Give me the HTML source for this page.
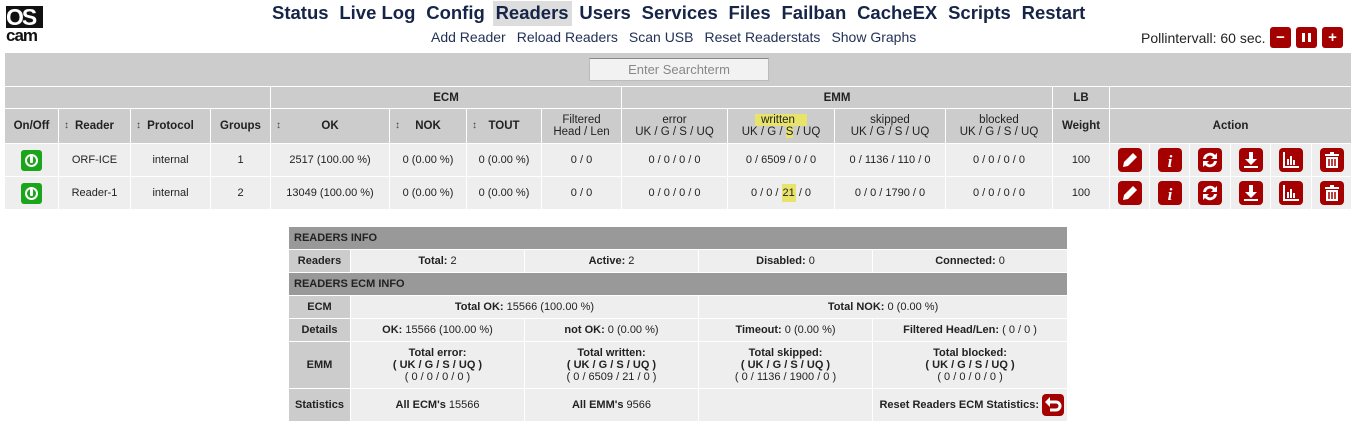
<!DOCTYPE html>
<html><head><meta charset="utf-8"><style>
body{margin:0;width:1356px;height:442px;background:#fff;font-family:"Liberation Sans",Arial,sans-serif;position:relative;overflow:hidden;color:#222}
.nav{position:absolute;top:1px;left:269px;font-size:18.5px;font-weight:bold;color:#162447;white-space:nowrap}
.nav span{display:inline-block;padding:1px 3px 2px;margin-right:4.8px}
.nav .act{background:#ddd}
.sub{position:absolute;top:29px;left:431px;font-size:14px;color:#1f2f55;white-space:nowrap;word-spacing:0}
.sub span{margin-right:11px}
.poll{position:absolute;top:30px;left:1141px;font-size:14px;color:#222}
.pb{position:absolute;top:27px;width:21px;height:21px;background:#a50000;border-radius:3px;color:#fff;font-weight:bold;text-align:center;line-height:21px;font-size:15px}
table{border-collapse:collapse;table-layout:fixed;position:absolute}
td{border:1px solid #fff;text-align:center;font-size:11px;padding:0;overflow:hidden;white-space:nowrap}
#m{left:4px;top:52px;width:1348px}
#m .h td{background:#ccc;font-weight:bold;font-size:11.5px;color:#222}
#m .d td{background:#eee;color:#222}
.srt{position:relative}
.srt:before{content:"\2195";position:absolute;left:5px;font-size:10px;font-weight:normal;color:#444}
.on{display:inline-block;width:21px;height:21px;background:#1aa51a;border-radius:3px;vertical-align:middle;position:relative}
.on:after{content:"";position:absolute;left:4px;top:4px;width:9px;height:9px;border:2px solid #fff;border-radius:50%}
.on:before{content:"";position:absolute;left:9px;top:6px;width:3px;height:7px;background:#fff;z-index:1;border-radius:1px}
.ic{display:inline-block;width:24px;height:24px;background:#a50000;border-radius:4px;vertical-align:middle}
.ic svg{display:block}
#b{left:288px;top:226px;width:779px}
#b td{background:#eee;height:22px;font-size:11px;color:#222}
#b td.l{background:#ccc;font-weight:bold}
#b td.g{background:#999;text-align:left;font-weight:bold;padding-left:5px;color:#222;font-size:11px}
b{font-weight:bold}
</style></head><body>
<div style="position:absolute;left:6px;top:6px;width:37px;height:38px">
<div style="background:#111;color:#fff;font-weight:bold;font-size:23px;line-height:22px;letter-spacing:-2px;width:37px;height:22px;overflow:hidden">OS</div>
<div style="color:#111;font-weight:bold;font-size:17px;line-height:16px;letter-spacing:-1px">cam</div></div>
<div class="nav"><span>Status</span><span>Live Log</span><span>Config</span><span class="act">Readers</span><span>Users</span><span>Services</span><span>Files</span><span>Failban</span><span>CacheEX</span><span>Scripts</span><span>Restart</span></div>
<div class="sub"><span>Add Reader</span><span>Reload Readers</span><span>Scan USB</span><span>Reset Readerstats</span><span>Show Graphs</span></div>
<div class="poll">Pollintervall: 60 sec.</div>
<div class="pb" style="left:1270px">&minus;</div>
<div class="pb" style="left:1296px"><div style="position:absolute;left:6px;top:6px;width:3px;height:9px;background:#fff"></div><div style="position:absolute;left:12px;top:6px;width:3px;height:9px;background:#fff"></div></div>
<div class="pb" style="left:1322px">+</div>

<table id="m">
<colgroup><col style="width:54px"><col style="width:72px"><col style="width:80px"><col style="width:60px"><col style="width:119px"><col style="width:77px"><col style="width:75px"><col style="width:80px"><col style="width:106px"><col style="width:107px"><col style="width:111px"><col style="width:107px"><col style="width:57px"><col style="width:40px"><col style="width:40px"><col style="width:41px"><col style="width:40px"><col style="width:41px"><col style="width:40px"></colgroup>
<tr class="h"><td colspan="19" style="height:33px;position:relative"><div style="position:absolute;left:584px;top:5px;width:178px;height:21px;background:#f2f2f2;border:1px solid #bbb;border-top-color:#888;font-weight:normal;color:#888;font-size:13px;line-height:21px">Enter Searchterm</div></td></tr>
<tr class="h"><td colspan="4" style="height:21px"></td><td colspan="4">ECM</td><td colspan="4">EMM</td><td>LB</td><td colspan="6"></td></tr>
<tr class="h" style="height:35px"><td>On/Off</td><td class="srt">Reader</td><td class="srt">Protocol</td><td>Groups</td><td class="srt">OK</td><td class="srt">NOK</td><td class="srt">TOUT</td><td style="font-weight:normal">Filtered<br>Head / Len</td><td style="font-weight:normal">error<br>UK / G / S / UQ</td><td style="font-weight:normal"><span style="background:#e8e36a;padding:0 12px 0 6px">written</span><br>UK / G / <span style="background:#e8e36a">S</span> / UQ</td><td style="font-weight:normal">skipped<br>UK / G / S / UQ</td><td style="font-weight:normal">blocked<br>UK / G / S / UQ</td><td>Weight</td><td colspan="6">Action</td></tr>
<tr class="d" style="height:33px"><td><span class="on"></span></td><td>ORF-ICE</td><td>internal</td><td>1</td><td>2517 (100.00 %)</td><td>0 (0.00 %)</td><td>0 (0.00 %)</td><td>0 / 0</td><td>0 / 0 / 0 / 0</td><td>0 / 6509 / 0 / 0</td><td>0 / 1136 / 110 / 0</td><td>0 / 0 / 0 / 0</td><td>100</td>
<td><span class="ic"><svg width="24" height="24"><path d="M5 19l1-5 9-9 4 4-9 9z" fill="#fff"/></svg></span></td>
<td><span class="ic"><svg width="24" height="24"><text x="12" y="19" fill="#fff" font-size="17" font-weight="bold" font-style="italic" font-family="Liberation Serif" text-anchor="middle">i</text></svg></span></td>
<td><span class="ic"><svg width="24" height="24"><path d="M5 11a7 7 0 0 1 12-4l2-2v6h-6l2-2a4 4 0 0 0-7 2zM19 13a7 7 0 0 1-12 4l-2 2v-6h6l-2 2a4 4 0 0 0 7-2z" fill="#fff"/></svg></span></td>
<td><span class="ic"><svg width="24" height="24"><path d="M10 4h4v7h4l-6 6-6-6h4zM5 18h14v2H5z" fill="#fff"/></svg></span></td>
<td><span class="ic"><svg width="24" height="24"><path d="M4 4h2v14h14v2H4zM8 11h2v6H8zM11 8h2v9h-2zM14 12h2v5h-2z" fill="#fff"/></svg></span></td>
<td><span class="ic"><svg width="24" height="24"><path d="M5 6h14v2H5zM10 4h4v2h-4zM6 9h12v11H6z" fill="#fff"/><path d="M9 11v7M12 11v7M15 11v7" stroke="#a50000" stroke-width="1.5"/></svg></span></td></tr>
<tr class="d" style="height:33px"><td><span class="on"></span></td><td>Reader-1</td><td>internal</td><td>2</td><td>13049 (100.00 %)</td><td>0 (0.00 %)</td><td>0 (0.00 %)</td><td>0 / 0</td><td>0 / 0 / 0 / 0</td><td>0 / 0 / <span style="background:#e8e36a;padding:3px 1px">21</span> / 0</td><td>0 / 0 / 1790 / 0</td><td>0 / 0 / 0 / 0</td><td>100</td>
<td><span class="ic"><svg width="24" height="24"><path d="M5 19l1-5 9-9 4 4-9 9z" fill="#fff"/></svg></span></td>
<td><span class="ic"><svg width="24" height="24"><text x="12" y="19" fill="#fff" font-size="17" font-weight="bold" font-style="italic" font-family="Liberation Serif" text-anchor="middle">i</text></svg></span></td>
<td><span class="ic"><svg width="24" height="24"><path d="M5 11a7 7 0 0 1 12-4l2-2v6h-6l2-2a4 4 0 0 0-7 2zM19 13a7 7 0 0 1-12 4l-2 2v-6h6l-2 2a4 4 0 0 0 7-2z" fill="#fff"/></svg></span></td>
<td><span class="ic"><svg width="24" height="24"><path d="M10 4h4v7h4l-6 6-6-6h4zM5 18h14v2H5z" fill="#fff"/></svg></span></td>
<td><span class="ic"><svg width="24" height="24"><path d="M4 4h2v14h14v2H4zM8 11h2v6H8zM11 8h2v9h-2zM14 12h2v5h-2z" fill="#fff"/></svg></span></td>
<td><span class="ic"><svg width="24" height="24"><path d="M5 6h14v2H5zM10 4h4v2h-4zM6 9h12v11H6z" fill="#fff"/><path d="M9 11v7M12 11v7M15 11v7" stroke="#a50000" stroke-width="1.5"/></svg></span></td></tr>
</table>

<table id="b">
<colgroup><col style="width:62px"><col style="width:174px"><col style="width:174px"><col style="width:174px"><col style="width:195px"></colgroup>
<tr><td class="g" colspan="5">READERS INFO</td></tr>
<tr><td class="l">Readers</td><td><b>Total:</b> 2</td><td><b>Active:</b> 2</td><td><b>Disabled:</b> 0</td><td><b>Connected:</b> 0</td></tr>
<tr><td class="g" colspan="5">READERS ECM INFO</td></tr>
<tr><td class="l">ECM</td><td colspan="2"><b>Total OK:</b> 15566 (100.00 %)</td><td colspan="2"><b>Total NOK:</b> 0 (0.00 %)</td></tr>
<tr><td class="l">Details</td><td><b>OK:</b> 15566 (100.00 %)</td><td><b>not OK:</b> 0 (0.00 %)</td><td><b>Timeout:</b> 0 (0.00 %)</td><td><b>Filtered Head/Len:</b> ( 0 / 0 )</td></tr>
<tr style="height:47px"><td class="l">EMM</td><td style="line-height:12px"><b>Total error:<br>( UK / G / S / UQ )</b><br>( 0 / 0 / 0 / 0 )</td><td style="line-height:12px"><b>Total written:<br>( UK / G / S / UQ )</b><br>( 0 / 6509 / 21 / 0 )</td><td style="line-height:12px"><b>Total skipped:<br>( UK / G / S / UQ )</b><br>( 0 / 1136 / 1900 / 0 )</td><td style="line-height:12px"><b>Total blocked:<br>( UK / G / S / UQ )</b><br>( 0 / 0 / 0 / 0 )</td></tr>
<tr style="height:33px"><td class="l">Statistics</td><td><b>All ECM's</b> 15566</td><td><b>All EMM's</b> 9566</td><td></td><td style="text-align:right;padding-right:3px"><b>Reset Readers ECM Statistics:</b> <span class="ic" style="width:22px;height:22px"><svg width="22" height="22"><path d="M7 8h7a4 4 0 0 1 0 8H8" stroke="#fff" stroke-width="3" fill="none"/><path d="M3 8l5-5v10z" fill="#fff"/></svg></span></td></tr>
</table>
</body></html>
